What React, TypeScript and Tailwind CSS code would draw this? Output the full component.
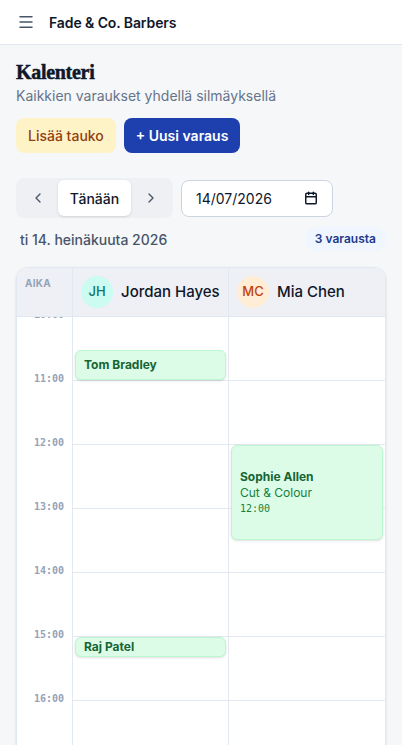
import { ChevronLeft, ChevronRight, Menu, Calendar } from "lucide-react"

const hours = [10, 11, 12, 13, 14, 15, 16, 17, 18]

const barbers = [
  { id: "jh", name: "Jordan Hayes", initials: "JH", avatar: "bg-[#ccfbf1] text-[#0f766e]" },
  { id: "mc", name: "Mia Chen", initials: "MC", avatar: "bg-[#ffedd5] text-[#c2410c]" },
]

// top/height in px, 64px per hour, grid starts at 10:00
const bookings = [
  { barber: "jh", name: "Tom Bradley", top: 33, height: 30 },
  { barber: "mc", name: "Sophie Allen", service: "Cut & Colour", time: "12:00", top: 128, height: 95 },
  { barber: "jh", name: "Raj Patel", top: 320, height: 20 },
]

export default function App() {
  return (
    <div className="min-h-screen bg-[#f6f7f9] font-['Inter',sans-serif] text-[#0f172a]">
      <header className="flex h-[45px] items-center gap-[14px] border-b border-[#e2e8f0] bg-white px-[17px]">
        <Menu className="size-[18px] text-[#475569]" strokeWidth={2} />
        <span className="text-[14px] font-semibold tracking-[-0.1px]">Fade &amp; Co. Barbers</span>
      </header>

      <main className="px-4 pt-[13px]">
        <h1 className="font-['Liberation_Serif',serif] text-[20px] leading-7 font-bold tracking-[-0.3px] text-[#0f172a] [-webkit-text-stroke:0.5px_#0f172a]">
          Kalenteri
        </h1>
        <p className="text-[14px] leading-5 text-[#64748b]">Kaikkien varaukset yhdellä silmäyksellä</p>

        <div className="mt-[12px] flex gap-2">
          <button className="h-[35px] rounded-lg bg-[#fef3c7] px-[12px] text-[14px] font-medium text-[#92400e]">
            Lisää tauko
          </button>
          <button className="h-[35px] rounded-lg bg-[#1e40af] px-[12px] text-[14px] font-semibold text-white">
            + Uusi varaus
          </button>
        </div>

        <div className="mt-[25px] flex gap-2">
          <div className="flex h-[40px] items-center rounded-lg bg-[#eef0f4] p-[2px]">
            <button className="flex h-[36px] w-[40px] items-center justify-center text-[#475569]">
              <ChevronLeft className="size-4" />
            </button>
            <button className="h-[36px] w-[73px] rounded-md bg-white text-[14px] font-medium shadow-sm">Tänään</button>
            <button className="flex h-[36px] w-[40px] items-center justify-center text-[#475569]">
              <ChevronRight className="size-4" />
            </button>
          </div>
          <div className="flex h-[37px] w-[152px] items-center justify-between self-center rounded-lg border border-[#cbd5e1] bg-white pr-[14px] pl-[14px] text-[14px]">
            <span>14/07/2026</span>
            <Calendar className="size-[14px] text-[#0f172a]" strokeWidth={2.5} />
          </div>
        </div>

        <div className="mt-[9px] flex items-center justify-between pl-1">
          <span className="text-[14px] font-medium text-[#475569]">ti 14. heinäkuuta 2026</span>
          <span className="rounded-full bg-[#eff6ff] px-[10px] py-[3px] text-[12px] font-semibold text-[#1e3a8a]">
            3 varausta
          </span>
        </div>

        <div className="mt-[16px] overflow-hidden rounded-xl border border-[#e2e8f0] bg-white shadow-sm">
          <div className="grid grid-cols-[56px_1fr_1fr] border-b border-[#e2e8f0] bg-[#eef0f5]">
            <div className="h-[48px] border-r border-[#e2e8f0] pt-[8px] pl-2 text-[10px] font-bold tracking-wide text-[#94a3b8]">
              AIKA
            </div>
            {barbers.map((b, i) => (
              <div
                key={b.id}
                className={`flex h-[48px] items-center gap-2 px-2 ${i === 0 ? "border-r border-[#e2e8f0]" : ""}`}
              >
                <span
                  className={`flex size-8 items-center justify-center rounded-full text-[13px] font-medium ${b.avatar}`}
                >
                  {b.initials}
                </span>
                <span className="text-[15px] font-medium text-[#0f172a]">{b.name}</span>
              </div>
            ))}
          </div>

          <div className="grid grid-cols-[56px_1fr_1fr] overflow-hidden">
            <div className="border-r border-[#e2e8f0]">
              {hours.map((h) => (
                <div key={h} className="relative h-16">
                  <span className="absolute -top-[10px] right-2 font-['DejaVu_Sans_Mono',monospace] text-[10px] leading-4 font-bold text-[#94a3b8]">
                    {h}:00
                  </span>
                </div>
              ))}
            </div>
            {barbers.map((b, i) => (
              <div key={b.id} className={`relative ${i === 0 ? "border-r border-[#e2e8f0]" : ""}`}>
                {hours.slice(1).map((h) => (
                  <div key={h} className="h-16 border-b border-[#e2e8f0]" />
                ))}
                {bookings
                  .filter((bk) => bk.barber === b.id)
                  .map((bk) => (
                    <div
                      key={bk.name}
                      className="absolute right-[2px] left-[2px] flex flex-col justify-center overflow-hidden rounded-md border border-[#bbf7d0] bg-[#dcfce7] px-2 shadow-sm"
                      style={{ top: bk.top, height: bk.height }}
                    >
                      <span className="text-[12px] leading-4 font-bold text-[#166534]">{bk.name}</span>
                      {bk.service && <span className="text-[12px] leading-4 text-[#15803d]">{bk.service}</span>}
                      {bk.time && (
                        <span className="font-['DejaVu_Sans_Mono',monospace] text-[10px] leading-4 text-[#15803d]">
                          {bk.time}
                        </span>
                      )}
                    </div>
                  ))}
              </div>
            ))}
          </div>
        </div>
      </main>
    </div>
  )
}
